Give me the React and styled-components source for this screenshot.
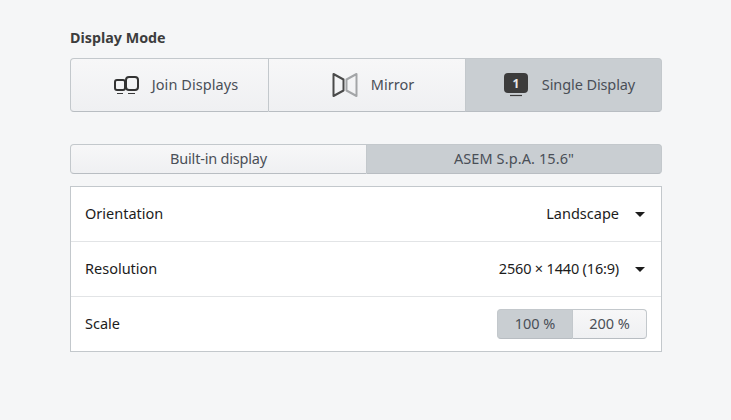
import React from "react";
import styled, { createGlobalStyle } from "styled-components";

const Global = createGlobalStyle`
  html, body { margin: 0; padding: 0; background: #f5f6f7; }
  body { font-family: "Noto Sans", "Open Sans", sans-serif; font-size: 14.5px; color: #3d3d3d; }
`;

const Page = styled.div`
  width: 731px;
  height: 420px;
  box-sizing: border-box;
  padding: 29px 69px 0 70px;
  display: flex;
  flex-direction: column;
  overflow: hidden;
`;

const Heading = styled.h2`
  margin: 0 0 11px;
  font-size: 14.3px;
  line-height: 18px;
  font-weight: 700;
  color: #3d3d3d;
`;

const ModeGroup = styled.div`
  display: grid;
  grid-template-columns: 199px 197px 196px;
  height: 54px;
  margin-bottom: 32px;
`;

const Segment = styled.button`
  box-sizing: border-box;
  margin: 0;
  padding: 0;
  display: flex;
  align-items: center;
  justify-content: center;
  font-family: inherit;
  font-size: 14.5px;
  color: #4a4f57;
  border: 1px solid #c3c8cc;
  border-left-width: ${(p) => (p.$first ? "1px" : "0")};
  border-bottom-color: #b8bdc2;
  border-radius: ${(p) => (p.$first ? "4px 0 0 4px" : p.$last ? "0 4px 4px 0" : "0")};
  background: ${(p) => (p.$active ? "#c9ced2" : "linear-gradient(#f7f7f8, #eff0f2)")};
`;

const ModeButton = styled(Segment)`
  gap: ${(p) => p.$gap}px;
  padding-left: 12px;
`;

const Label = styled.span`
  margin-bottom: 2px;
  letter-spacing: ${(p) => p.$track || 0}px;
`;

const TabGroup = styled.div`
  display: grid;
  grid-template-columns: 297px 295px;
  height: 30px;
  margin-bottom: 12px;
`;

const Frame = styled.div`
  background: #fff;
  border: 1px solid #c3c8cc;
  width: 592px;
  box-sizing: border-box;
`;

const Row = styled.div`
  box-sizing: border-box;
  height: 55px;
  padding: 0 14px;
  display: flex;
  align-items: center;
  justify-content: space-between;
  color: #1c1c1c;
  &:not(:last-child) { border-bottom: 1px solid #e2e4e6; }
  &:last-child { height: 54px; }
`;

const Value = styled.div`
  display: flex;
  align-items: center;
  gap: 16px;
  padding-right: 2px;
`;

const Arrow = styled.span`
  width: 0;
  height: 0;
  border-left: 5px solid transparent;
  border-right: 5px solid transparent;
  border-top: 5px solid #1c1c1c;
`;

const ScaleGroup = styled.div`
  display: grid;
  grid-template-columns: 76px 74px;
  height: 30px;
`;

const Icon = styled.svg`
  display: block;
  flex: none;
`;

const JoinIcon = () => (
  <Icon width="26" height="20" viewBox="0 0 26 20" fill="none">
    <rect x="2" y="5" width="10" height="10" rx="2" stroke="#333" strokeWidth="2" />
    <rect x="13" y="2" width="12" height="13" rx="3" stroke="#333" strokeWidth="2" />
    <path d="M4 18.500h6M15 18.500h7" stroke="#3a3a3a" strokeWidth="1" />
  </Icon>
);

const MirrorIcon = () => (
  <Icon width="26" height="26" viewBox="0 0 26 26" fill="none">
    <path d="M1.5 2v22l10-5.5V7.5z" stroke="#4a4a4a" strokeWidth="2" strokeLinejoin="round" />
    <path d="M24.5 2v22l-10-5.500V7.500z" stroke="#a3a5a7" strokeWidth="2" strokeLinejoin="round" />
  </Icon>
);

const SingleIcon = () => (
  <Icon width="24" height="24" viewBox="0 0 24 24">
    <rect x="0" y="0" width="24" height="20" rx="4" fill="#3c3c3c" />
    <text x="12" y="15" textAnchor="middle" fontSize="12" fontWeight="700" fontFamily="Noto Sans" fill="#e8e8e8">1</text>
    <path d="M6 22.500h12" stroke="#3c3c3c" strokeWidth="1.200" />
  </Icon>
);

export default function App() {
  return (
    <Page>
      <Global />
      <Heading>Display Mode</Heading>
      <ModeGroup>
        <ModeButton $first $gap={13}><JoinIcon /><Label $track={0.08}>Join Displays</Label></ModeButton>
        <ModeButton $gap={13}><MirrorIcon /><Label>Mirror</Label></ModeButton>
        <ModeButton $last $active $gap={14}><SingleIcon /><Label $track={-0.1}>Single Display</Label></ModeButton>
      </ModeGroup>
      <TabGroup>
        <Segment $first><Label $track={-0.2}>Built-in display</Label></Segment>
        <Segment $last $active><Label $track={0.1}>ASEM S.p.A. 15.6"</Label></Segment>
      </TabGroup>
      <Frame>
        <Row>
          <Label>Orientation</Label>
          <Value><Label>Landscape</Label><Arrow /></Value>
        </Row>
        <Row>
          <Label>Resolution</Label>
          <Value><Label $track={-0.18}>2560 × 1440 (16:9)</Label><Arrow /></Value>
        </Row>
        <Row>
          <Label>Scale</Label>
          <ScaleGroup>
            <Segment $first $active><Label>100 %</Label></Segment>
            <Segment $last><Label>200 %</Label></Segment>
          </ScaleGroup>
        </Row>
      </Frame>
    </Page>
  );
}
